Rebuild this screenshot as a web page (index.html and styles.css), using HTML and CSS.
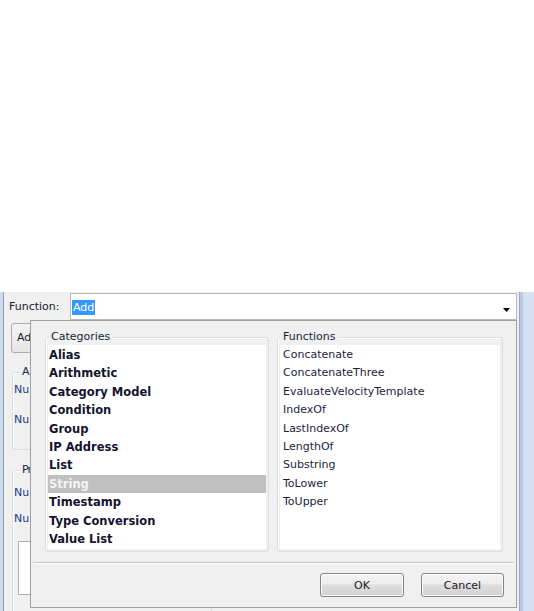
FILE: index.html
```html
<!DOCTYPE html>
<html>
<head>
<meta charset="utf-8">
<link rel="stylesheet" href="styles.css">
</head>
<body>
<div class="page">
  <div class="top"></div>
  <div class="window">
    <div class="frame-left"></div>
    <div class="client">
      <div class="func-row">
        <span class="func-label">Function:</span>
        <div class="combo">
          <span class="combo-sel">Add</span>
          <svg class="combo-arrow" width="7" height="4" viewBox="0 0 7 4"><path d="M0 0H7L3.5 4Z" fill="#000"/></svg>
        </div>
      </div>
      <div class="under">
        <div class="under-btn">Ad</div>
        <div class="ugrp ugrp-a">
          <span class="gtitle utitle">A</span>
          <div class="nu nu-1">Nu</div>
          <div class="nu nu-2">Nu</div>
        </div>
        <div class="ugrp ugrp-p">
          <span class="gtitle utitle tight">Pr</span>
          <div class="nu nu-3">Nu</div>
          <div class="nu nu-4">Nu</div>
          <div class="utext"></div>
        </div>
      </div>
      <div class="popup">
        <div class="groups">
          <div class="gbox cat">
            <span class="gtitle">Categories</span>
            <div class="list cat-list">
              <div class="item">Alias</div>
              <div class="item">Arithmetic</div>
              <div class="item">Category Model</div>
              <div class="item">Condition</div>
              <div class="item">Group</div>
              <div class="item">IP Address</div>
              <div class="item">List</div>
              <div class="item selected">String</div>
              <div class="item">Timestamp</div>
              <div class="item">Type Conversion</div>
              <div class="item">Value List</div>
            </div>
          </div>
          <div class="gbox fn">
            <span class="gtitle">Functions</span>
            <div class="list fn-list">
              <div class="item">Concatenate</div>
              <div class="item">ConcatenateThree</div>
              <div class="item">EvaluateVelocityTemplate</div>
              <div class="item">IndexOf</div>
              <div class="item">LastIndexOf</div>
              <div class="item">LengthOf</div>
              <div class="item">Substring</div>
              <div class="item">ToLower</div>
              <div class="item">ToUpper</div>
            </div>
          </div>
        </div>
        <div class="sep"></div>
        <div class="btns">
          <div class="btn ok">OK</div>
          <div class="btn cancel">Cancel</div>
        </div>
      </div>
    </div>
    <div class="frame-right"></div>
  </div>
</div>
</body>
</html>
```

FILE: styles.css
```css
* { box-sizing: border-box; }
body {
  margin: 0;
  background: #fff;
  font-family: "DejaVu Sans", sans-serif;
  font-size: 11px;
  color: #1b1d36;
}
.page {
  width: 534px;
  height: 611px;
  display: flex;
  flex-direction: column;
  overflow: hidden;
}
.top { height: 292px; flex: none; background: #fff; }
.window { flex: 1; display: flex; min-height: 0; }
.frame-left {
  width: 4px;
  flex: none;
  background: linear-gradient(to right, #cbdbee 0 3px, #8d9db3 3px 4px);
}
.frame-right {
  width: 15px;
  flex: none;
  background: linear-gradient(to right, #9ba7b6 0 1px, #b8cbe2 1px 4px, #d3e1f2 4px);
}
.client {
  flex: 1;
  background: #f0f0f0;
  position: relative;
  overflow: hidden;
}

/* Function row */
.func-row { height: 28px; display: flex; align-items: flex-start; }
.func-label { margin: 8px 0 0 5px; width: 61px; line-height: 14px; color: #1a1a2a; }
.combo {
  margin-top: 1px;
  height: 27px;
  width: 447px;
  border: 1px solid #b6b8bd;
  background: #fff;
  display: flex;
  align-items: flex-start;
}
.combo-sel {
  margin: 6px 0 0 1px;
  padding: 0 1px;
  line-height: 15px;
  background: #3399ff;
  color: #fff;
}
.combo-arrow { margin: 14px 6px 0 auto; display: block; }

/* Underlying dialog content (mostly hidden by the popup) */
.under { padding-left: 7px; }
.under-btn {
  margin-top: 3px;
  width: 120px;
  height: 30px;
  border: 1px solid #acacac;
  border-radius: 3px;
  background: linear-gradient(#f3f3f3, #e6e6e6);
  padding-left: 5px;
  line-height: 28px;
  color: #1a1a2a;
}
.ugrp {
  margin-left: 1px;
  width: 200px;
  border: 1px solid #d5dfe5;
  border-radius: 3px;
  box-shadow: inset 1px 1px 0 #fff;
  display: flex;
  flex-direction: column;
  padding-left: 1px;
}
.ugrp-a { margin-top: 19px; height: 78px; }
.ugrp-p { margin-top: 20px; height: 160px; }
.utitle { margin-left: 6px !important; color: #1b2550 !important; }
.tight { letter-spacing: -1px; }
.nu { line-height: 14px; color: #24388a; }
.nu-1 { margin-top: 4px; }
.nu-2 { margin-top: 16px; }
.nu-3 { margin-top: 9px; }
.nu-4 { margin-top: 12px; }
.utext {
  margin: 15px 0 0 4px;
  height: 54px;
  width: 150px;
  background: #fff;
  border: 1px solid #abadb3;
}

/* Popup dialog */
.popup {
  position: absolute;
  left: 26px;
  top: 28px;
  width: 487px;
  height: 288px;
  border: 1px solid #a0a0a0;
  background: #f0f0f0;
  padding: 16px 13px 0 14px;
  display: flex;
  flex-direction: column;
}
.groups { display: flex; gap: 8px; height: 215px; flex: none; }
.gbox {
  border: 1px solid #d5dfe5;
  border-radius: 3px;
  box-shadow: inset 1px 1px 0 #fff;
  padding: 0 2px 2px;
  display: flex;
  flex-direction: column;
}
.gbox.cat { width: 224px; }
.gbox.fn { width: 226px; }
.gtitle {
  margin: -8px 0 0 1px;
  padding: 0 2px;
  background: #f0f0f0;
  align-self: flex-start;
  line-height: 14px;
  color: #1b1d36;
}
.list {
  flex: 1;
  margin-top: 1px;
  background: #fff;
  padding-top: 1px;
  overflow: hidden;
}
.item { height: 18.4px; line-height: 18.4px; white-space: nowrap; }
.cat-list .item { font-weight: bold; font-size: 11.5px; padding-left: 1px; color: #12142e; }
.fn-list .item { padding-left: 3px; color: #1b1e3c; }
.item.selected { background: #c0c0c0; color: #f4f4f4 !important; }

.sep {
  margin: 10px -11px 0 -12px;
  border-top: 1px solid #c6c6c6;
  border-bottom: 1px solid #fff;
}
.btns {
  display: flex;
  justify-content: flex-end;
  gap: 17px;
  margin: 9px -1px 0 0;
}
.btn {
  height: 24px;
  border: 1px solid #868686;
  border-radius: 3px;
  background: linear-gradient(#f4f4f4, #ececec 45%, #dedede 50%, #d2d2d2);
  box-shadow: inset 0 0 0 1px #fbfbfb;
  display: flex;
  align-items: center;
  justify-content: center;
  color: #1a1a2a;
}
.btn.ok { width: 84px; }
.btn.cancel { width: 83px; }
```
